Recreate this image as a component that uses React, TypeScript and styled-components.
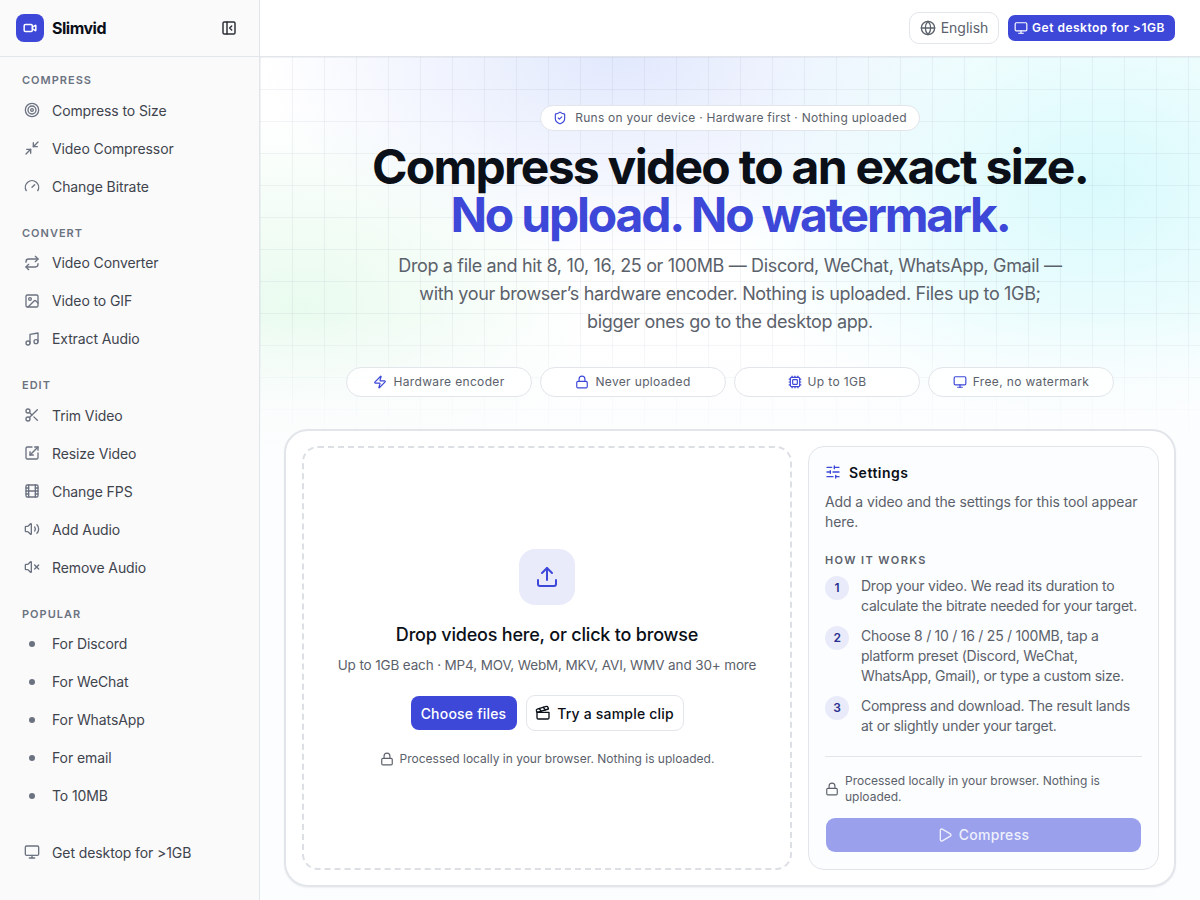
import React from "react";
import styled, { createGlobalStyle } from "styled-components";
import {
  Target,
  Minimize2,
  Gauge,
  Repeat,
  Image as ImageIcon,
  Music,
  Scissors,
  Scaling,
  Film,
  Volume2,
  VolumeX,
  Monitor,
  Globe,
  ShieldCheck,
  Zap,
  Lock,
  Cpu,
  SlidersHorizontal,
  Upload,
  Clapperboard,
  Play,
  PanelLeftClose,
  Video,
} from "lucide-react";

const primary = "#3d47d8";

const GlobalStyle = createGlobalStyle`
  html, body {
    margin: 0;
    height: 900px;
    overflow: hidden;
    background: #fff;
  }
  * {
    box-sizing: border-box;
  }
  body {
    font-family: Inter, "Liberation Sans", sans-serif;
    color: #0b1018;
  }
`;

const Shell = styled.div`
  display: flex;
  width: 1200px;
  height: 900px;
`;

const Sidebar = styled.aside`
  width: 260px;
  flex: none;
  background: #fafafb;
  border-right: 1px solid #e2e5ea;
  display: flex;
  flex-direction: column;
`;

const Brand = styled.div`
  height: 56px;
  flex: none;
  margin-bottom: 1px;
  box-shadow: 0 1px 0 #e2e5ea;
  display: flex;
  align-items: center;
  justify-content: space-between;
  padding: 0 22px 0 16px;
`;

const BrandName = styled.div`
  display: flex;
  align-items: center;
  gap: 8px;
  font-size: 16px;
  font-weight: 700;
  letter-spacing: -0.5px;
`;

const Logo = styled.span`
  width: 28px;
  height: 28px;
  border-radius: 8px;
  background: ${primary};
  color: #fff;
  display: flex;
  align-items: center;
  justify-content: center;
`;

const Nav = styled.nav`
  padding: 15px 16px 0 16px;
  display: flex;
  flex-direction: column;
  gap: 19.67px;
`;

const NavGroup = styled.div`
  display: flex;
  flex-direction: column;
`;

const NavFooter = styled.div`
  margin-top: -1.5px;
`;

const NavLabel = styled.div`
  padding-left: 6px;
  margin-bottom: 2.5px;
  font-size: 11px;
  line-height: 16.5px;
  font-weight: 600;
  letter-spacing: 1px;
  color: #6b7280;
`;

const NavItem = styled.a`
  height: 38px;
  display: flex;
  align-items: center;
  gap: 12px;
  padding-left: 8px;
  font-size: 14px;
  letter-spacing: -0.1px;
  color: #3f444d;
  svg {
    flex: none;
    color: #6b7280;
  }
`;

const Dot = styled.span`
  width: 16px;
  display: flex;
  justify-content: center;
  flex: none;
  &::before {
    content: "";
    width: 6px;
    height: 6px;
    border-radius: 50%;
    background: #6b7280;
  }
`;

const Main = styled.main`
  flex: 1;
  min-width: 0;
  display: flex;
  flex-direction: column;
`;

const Topbar = styled.header`
  height: 57px;
  flex: none;
  background: #fff;
  border-bottom: 1px solid #e2e5ea;
  display: flex;
  align-items: center;
  justify-content: flex-end;
  gap: 9px;
  padding: 0 25px 1px 0;
`;

const LangButton = styled.button`
  width: 90px;
  height: 32px;
  border: 1px solid #e2e5ea;
  border-radius: 10px;
  background: #fff;
  display: flex;
  align-items: center;
  justify-content: center;
  gap: 5px;
  padding: 0;
  font: 14px Inter, sans-serif;
  color: #5b616b;
`;

const DesktopButton = styled.button`
  width: 167px;
  height: 26px;
  border: 0;
  border-radius: 7px;
  background: ${primary};
  color: #fff;
  display: flex;
  align-items: center;
  justify-content: center;
  gap: 4px;
  padding: 0 4px 0 0;
  font: 600 12px Inter, sans-serif;
  letter-spacing: 0.5px;
`;

const Page = styled.div`
  flex: 1;
  padding: 48px 24px 0;
  display: flex;
  flex-direction: column;
  align-items: center;
  background-color: #fff;
  background-image: linear-gradient(
      to bottom,
      rgba(252, 253, 254, 0) 260px,
      rgba(252, 253, 254, 0.72) 350px,
      #fcfdfe 410px
    ),
    linear-gradient(to right, rgba(90, 105, 135, 0.08) 1px, transparent 1px),
    linear-gradient(to bottom, rgba(90, 105, 135, 0.08) 1px, transparent 1px),
    radial-gradient(ellipse 380px 280px at 840px 130px, #d9fafc 0%, rgba(217, 250, 252, 0) 100%),
    radial-gradient(ellipse 360px 200px at 360px 0, #e2e9fd 0%, rgba(226, 233, 253, 0) 100%),
    radial-gradient(ellipse 300px 200px at 40px 250px, #e9fbef 0%, rgba(233, 251, 239, 0) 100%);
  background-size: 100% 100%, 32px 32px, 32px 32px, 100% 100%, 100% 100%, 100% 100%;
`;

const Badge = styled.div`
  width: 380px;
  height: 26px;
  padding-bottom: 1px;
  border: 1px solid #e2e5ea;
  border-radius: 13px;
  background: #fff;
  display: flex;
  align-items: center;
  justify-content: center;
  gap: 8px;
  font-size: 12px;
  letter-spacing: 0.25px;
  color: #5b616b;
  svg {
    color: ${primary};
  }
`;

const Title = styled.h1`
  margin: 12px 0 0;
  font-size: 48px;
  line-height: 48px;
  font-weight: 700;
  letter-spacing: -1.72px;
  text-align: center;
  color: #0b1018;
`;

const Accent = styled.span`
  display: block;
  letter-spacing: -2.2px;
  color: ${primary};
`;

const Lead = styled.p`
  margin: 13px 0 0;
  width: 672px;
  font-size: 18px;
  line-height: 28px;
  letter-spacing: -0.35px;
  text-align: center;
  color: #5b616b;
`;

const Pills = styled.div`
  margin-top: 31px;
  display: flex;
  gap: 8px;
`;

const Pill = styled.div`
  width: 186px;
  height: 30px;
  padding-bottom: 1px;
  border: 1px solid #e2e5ea;
  border-radius: 15px;
  background: rgba(255, 255, 255, 0.8);
  display: flex;
  align-items: center;
  justify-content: center;
  gap: 6px;
  font-size: 12px;
  letter-spacing: 0.35px;
  color: #5b616b;
  svg {
    color: ${primary};
  }
`;

const Card = styled.section`
  margin-top: 32px;
  width: 892px;
  height: 458px;
  flex: none;
  border: 2px solid #e2e5ea;
  border-radius: 24px;
  background: #fff;
  box-shadow: 0 1px 2px rgba(15, 23, 42, 0.06);
  padding: 15px 15px 15px 16px;
  display: grid;
  grid-template-columns: 490px 351px;
  gap: 16px;
`;

const DropZone = styled.div`
  border: 2px dashed #dcdfe4;
  border-radius: 16px;
  display: flex;
  flex-direction: column;
  align-items: center;
  padding-top: 101px;
`;

const UploadBox = styled.div`
  width: 56px;
  height: 56px;
  border-radius: 16px;
  background: #e9ebfa;
  color: ${primary};
  display: flex;
  align-items: center;
  justify-content: center;
`;

const DropTitle = styled.div`
  margin-top: 18px;
  font-size: 18px;
  line-height: 24px;
  font-weight: 500;
  letter-spacing: -0.2px;
  color: #0b1018;
`;

const DropHint = styled.div`
  margin-top: 8px;
  font-size: 13.5px;
  line-height: 20px;
  letter-spacing: -0.14px;
  color: #5b616b;
`;

const DropActions = styled.div`
  margin-top: 20px;
  display: flex;
  align-items: center;
  gap: 9px;
`;

const ChooseButton = styled.button`
  width: 106px;
  height: 34px;
  border: 0;
  border-radius: 8px;
  background: ${primary};
  color: #fff;
  padding: 0;
  font: 500 14px Inter, sans-serif;
  letter-spacing: 0.2px;
`;

const SampleButton = styled.button`
  width: 158px;
  height: 36px;
  border: 1px solid #e2e5ea;
  border-radius: 9px;
  background: #fff;
  color: #0b1018;
  display: flex;
  align-items: center;
  justify-content: center;
  gap: 6px;
  padding: 0;
  font: 500 14px Inter, sans-serif;
  letter-spacing: 0.2px;
`;

const LocalNote = styled.div`
  margin-top: 20px;
  display: flex;
  align-items: center;
  gap: 6px;
  font-size: 12px;
  line-height: 16px;
  color: #5b616b;
`;

const Settings = styled.aside`
  border: 1px solid #e2e5ea;
  border-radius: 16px;
  background: #fcfdfe;
  padding: 15px 16px 16px;
  display: flex;
  flex-direction: column;
`;

const SettingsHead = styled.div`
  display: flex;
  align-items: center;
  gap: 8px;
  height: 20px;
  font-size: 14px;
  font-weight: 600;
  letter-spacing: 0.5px;
  svg {
    color: ${primary};
  }
`;

const Body = styled.p`
  margin: 10px 0 0;
  font-size: 14px;
  line-height: 20px;
  letter-spacing: -0.1px;
  color: #5b616b;
`;

const StepsLabel = styled.div`
  margin-top: 20px;
  font-size: 11px;
  line-height: 16px;
  font-weight: 600;
  letter-spacing: 1.4px;
  color: #5b616b;
`;

const Steps = styled.ol`
  list-style: none;
  margin: 8px 0 0;
  padding: 0;
  display: flex;
  flex-direction: column;
  gap: 10px;
`;

const Step = styled.li`
  display: flex;
  gap: 12px;
  font-size: 14px;
  line-height: 20px;
  letter-spacing: -0.25px;
  color: #5b616b;
`;

const StepNumber = styled.span`
  width: 24px;
  height: 24px;
  flex: none;
  border-radius: 50%;
  background: #e9ebfa;
  color: #282f8f;
  display: flex;
  align-items: center;
  justify-content: center;
  font-size: 12px;
  font-weight: 600;
`;

const Divider = styled.hr`
  margin: 20px 0 0;
  border: 0;
  border-top: 1px solid #e2e5ea;
`;

const FootNote = styled.div`
  margin-top: 16px;
  display: flex;
  align-items: center;
  gap: 6px;
  font-size: 12px;
  line-height: 16px;
  color: #5b616b;
  svg {
    flex: none;
  }
`;

const CompressButton = styled.button`
  margin: 13px 1px 0;
  height: 34px;
  border: 0;
  border-radius: 9px;
  background: #9aa0ec;
  color: #eef0fd;
  display: flex;
  align-items: center;
  justify-content: center;
  gap: 6px;
  padding: 0 1px 1px 0;
  font: 500 14px Inter, sans-serif;
  letter-spacing: 0.3px;
`;

const navGroups = [
  {
    label: "COMPRESS",
    items: [
      { icon: Target, text: "Compress to Size" },
      { icon: Minimize2, text: "Video Compressor" },
      { icon: Gauge, text: "Change Bitrate" },
    ],
  },
  {
    label: "CONVERT",
    items: [
      { icon: Repeat, text: "Video Converter" },
      { icon: ImageIcon, text: "Video to GIF" },
      { icon: Music, text: "Extract Audio" },
    ],
  },
  {
    label: "EDIT",
    items: [
      { icon: Scissors, text: "Trim Video" },
      { icon: Scaling, text: "Resize Video" },
      { icon: Film, text: "Change FPS" },
      { icon: Volume2, text: "Add Audio" },
      { icon: VolumeX, text: "Remove Audio" },
    ],
  },
  {
    label: "POPULAR",
    items: [
      { text: "For Discord" },
      { text: "For WeChat" },
      { text: "For WhatsApp" },
      { text: "For email" },
      { text: "To 10MB" },
    ],
  },
];

const pills = [
  { icon: Zap, text: "Hardware encoder" },
  { icon: Lock, text: "Never uploaded" },
  { icon: Cpu, text: "Up to 1GB" },
  { icon: Monitor, text: "Free, no watermark" },
];

const steps = [
  "Drop your video. We read its duration to calculate the bitrate needed for your target.",
  "Choose 8 / 10 / 16 / 25 / 100MB, tap a platform preset (Discord, WeChat, WhatsApp, Gmail), or type a custom size.",
  "Compress and download. The result lands at or slightly under your target.",
];

export default function App() {
  return (
    <Shell>
      <GlobalStyle />
      <Sidebar>
        <Brand>
          <BrandName>
            <Logo>
              <Video size={14} strokeWidth={2.5} />
            </Logo>
            Slimvid
          </BrandName>
          <PanelLeftClose size={16} color="#2b2f36" strokeWidth={2.2} />
        </Brand>
        <Nav>
          {navGroups.map((group) => (
            <NavGroup key={group.label}>
              <NavLabel>{group.label}</NavLabel>
              {group.items.map((item) => {
                const Icon = (item as any).icon;
                return (
                  <NavItem key={item.text}>
                    {Icon ? <Icon size={16} /> : <Dot />}
                    {item.text}
                  </NavItem>
                );
              })}
            </NavGroup>
          ))}
          <NavFooter>
            <NavItem>
              <Monitor size={16} />
              Get desktop for &gt;1GB
            </NavItem>
          </NavFooter>
        </Nav>
      </Sidebar>
      <Main>
        <Topbar>
          <LangButton>
            <Globe size={16} />
            English
          </LangButton>
          <DesktopButton>
            <Monitor size={14} />
            Get desktop for &gt;1GB
          </DesktopButton>
        </Topbar>
        <Page>
          <Badge>
            <ShieldCheck size={14} />
            Runs on your device · Hardware first · Nothing uploaded
          </Badge>
          <Title>
            Compress video to an exact size.
            <Accent>No upload. No watermark.</Accent>
          </Title>
          <Lead>
            Drop a file and hit 8, 10, 16, 25 or 100MB — Discord, WeChat, WhatsApp, Gmail — with
            your browser’s hardware encoder. Nothing is uploaded. Files up to 1GB; bigger ones go
            to the desktop app.
          </Lead>
          <Pills>
            {pills.map(({ icon: Icon, text }) => (
              <Pill key={text}>
                <Icon size={14} />
                {text}
              </Pill>
            ))}
          </Pills>
          <Card>
            <DropZone>
              <UploadBox>
                <Upload size={24} />
              </UploadBox>
              <DropTitle>Drop videos here, or click to browse</DropTitle>
              <DropHint>Up to 1GB each · MP4, MOV, WebM, MKV, AVI, WMV and 30+ more</DropHint>
              <DropActions>
                <ChooseButton>Choose files</ChooseButton>
                <SampleButton>
                  <Clapperboard size={16} />
                  Try a sample clip
                </SampleButton>
              </DropActions>
              <LocalNote>
                <Lock size={14} />
                Processed locally in your browser. Nothing is uploaded.
              </LocalNote>
            </DropZone>
            <Settings>
              <SettingsHead>
                <SlidersHorizontal size={16} />
                Settings
              </SettingsHead>
              <Body>Add a video and the settings for this tool appear here.</Body>
              <StepsLabel>HOW IT WORKS</StepsLabel>
              <Steps>
                {steps.map((text, i) => (
                  <Step key={text}>
                    <StepNumber>{i + 1}</StepNumber>
                    <span>{text}</span>
                  </Step>
                ))}
              </Steps>
              <Divider />
              <FootNote>
                <Lock size={14} />
                Processed locally in your browser. Nothing is uploaded.
              </FootNote>
              <CompressButton>
                <Play size={16} />
                Compress
              </CompressButton>
            </Settings>
          </Card>
        </Page>
      </Main>
    </Shell>
  );
}
